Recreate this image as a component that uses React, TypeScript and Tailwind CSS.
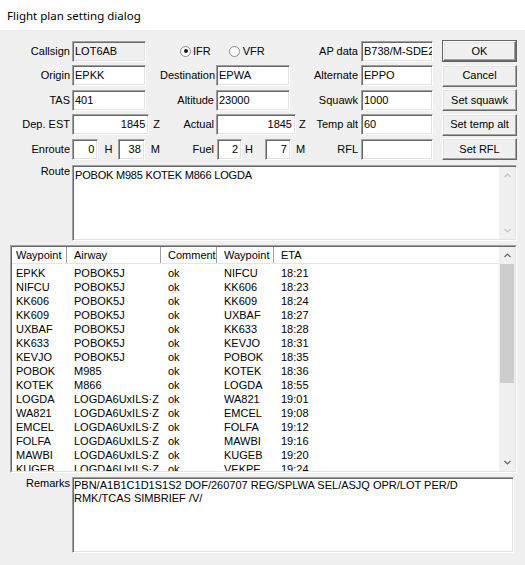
import React from 'react';

type Wp = [string, string, string, string, string];

const legs: Wp[] = [
  ['EPKK', 'POBOK5J', 'ok', 'NIFCU', '18:21'],
  ['NIFCU', 'POBOK5J', 'ok', 'KK606', '18:23'],
  ['KK606', 'POBOK5J', 'ok', 'KK609', '18:24'],
  ['KK609', 'POBOK5J', 'ok', 'UXBAF', '18:27'],
  ['UXBAF', 'POBOK5J', 'ok', 'KK633', '18:28'],
  ['KK633', 'POBOK5J', 'ok', 'KEVJO', '18:31'],
  ['KEVJO', 'POBOK5J', 'ok', 'POBOK', '18:35'],
  ['POBOK', 'M985', 'ok', 'KOTEK', '18:36'],
  ['KOTEK', 'M866', 'ok', 'LOGDA', '18:55'],
  ['LOGDA', 'LOGDA6UxILS·Z', 'ok', 'WA821', '19:01'],
  ['WA821', 'LOGDA6UxILS·Z', 'ok', 'EMCEL', '19:08'],
  ['EMCEL', 'LOGDA6UxILS·Z', 'ok', 'FOLFA', '19:12'],
  ['FOLFA', 'LOGDA6UxILS·Z', 'ok', 'MAWBI', '19:16'],
  ['MAWBI', 'LOGDA6UxILS·Z', 'ok', 'KUGEB', '19:20'],
  ['KUGEB', 'LOGDA6UxILS·Z', 'ok', 'VEKPE', '19:24'],
];

// classic 3D edges
const sunken =
  'border border-t-[#a0a0a0] border-l-[#a0a0a0] border-r-white border-b-white shadow-[inset_1px_1px_0_#696969,inset_-1px_-1px_0_#e3e3e3]';
const raised =
  'border border-t-white border-l-white border-r-[#696969] border-b-[#696969] shadow-[inset_-1px_-1px_0_#a0a0a0,inset_1px_1px_0_#e3e3e3]';

function Field({ children, className = '', right, grey }: { children?: React.ReactNode; className?: string; right?: boolean; grey?: boolean }) {
  return (
    <div
      className={`h-[21px] ${sunken} ${grey ? 'bg-[#f0f0f0]' : 'bg-white'} flex items-center whitespace-nowrap overflow-hidden ${right ? 'justify-end pr-[3px]' : 'pl-[2px]'} ${className}`}
    >
      {children}
    </div>
  );
}

function Button({ children, primary }: { children: React.ReactNode; primary?: boolean }) {
  if (primary) {
    return (
      <div className="w-[75px] h-[22px] border border-[#646464]">
        <div className={`h-full ${raised} bg-[#f0f0f0] flex items-center justify-center`}>{children}</div>
      </div>
    );
  }
  return <div className={`w-[75px] h-[22px] ${raised} bg-[#f0f0f0] flex items-center justify-center`}>{children}</div>;
}

function Radio({ checked }: { checked?: boolean }) {
  return (
    <span className="w-[11px] h-[11px] rounded-full border border-[#8c8c8c] bg-white flex items-center justify-center shrink-0">
      {checked && <span className="w-[4px] h-[4px] rounded-full bg-[#1a1a1a]" />}
    </span>
  );
}

function Chevron({ down, muted }: { down?: boolean; muted?: boolean }) {
  return (
    <svg width="7" height="5" viewBox="0 0 7 5" className={down ? 'rotate-180' : ''}>
      <polyline points="0.5,4 3.5,1 6.5,4" fill="none" stroke={muted ? '#c0c0c0' : '#606060'} strokeWidth="1.2" />
    </svg>
  );
}

function Label({ children, className }: { children: React.ReactNode; className: string }) {
  return <span className={`text-right whitespace-nowrap shrink-0 ${className}`}>{children}</span>;
}

const cols = [
  { name: 'Waypoint', cls: 'w-[55px] pl-[4px]' },
  { name: 'Airway', cls: 'w-[94px] pl-[7px]' },
  { name: 'Comment', cls: 'w-[56px] pl-[7px]' },
  { name: 'Waypoint', cls: 'w-[57px] pl-[7px]' },
  { name: 'ETA', cls: 'flex-1 pl-[7px]' },
];

export default function App() {
  return (
    <div className="w-[525px] h-[565px] bg-[#f0f0f0] text-black font-['Liberation_Sans',Arial,sans-serif] text-[11px] leading-[13px] overflow-hidden">
      <div className="h-[30px] bg-white flex items-center pl-[7px] font-['Noto_Sans',sans-serif] text-[11.5px]">
        Flight plan setting dialog
      </div>

      {/* Form fields */}
      <div className="pt-[10px] flex flex-col gap-y-[2.5px]">
        <div className="flex items-center h-[22px]">
          <div className="w-[160px] flex items-center">
            <Label className="w-[70px]">Callsign</Label>
            <Field className="ml-[2px] w-[74px]" grey>LOT6AB</Field>
          </div>
          <div className="w-[146px] flex items-center pl-[20px]">
            <Radio checked />
            <span className="ml-[2px]">IFR</span>
            <span className="ml-[18px]"><Radio /></span>
            <span className="ml-[3px]">VFR</span>
          </div>
          <div className="w-[130px] flex items-center">
            <Label className="w-[52px]">AP data</Label>
            <Field className="ml-[3px] w-[72px]">B738/M-SDE2</Field>
          </div>
          <div className="pl-[6px]"><Button primary>OK</Button></div>
        </div>

        <div className="flex items-center h-[22px]">
          <div className="w-[160px] flex items-center">
            <Label className="w-[70px]">Origin</Label>
            <Field className="ml-[2px] w-[74px]">EPKK</Field>
          </div>
          <div className="w-[146px] flex items-center">
            <Label className="w-[54px]">Destination</Label>
            <Field className="ml-[2px] w-[74px]">EPWA</Field>
          </div>
          <div className="w-[130px] flex items-center">
            <Label className="w-[52px]">Alternate</Label>
            <Field className="ml-[3px] w-[72px]">EPPO</Field>
          </div>
          <div className="pl-[6px]"><Button>Cancel</Button></div>
        </div>

        <div className="flex items-center h-[22px]">
          <div className="w-[160px] flex items-center">
            <Label className="w-[70px]">TAS</Label>
            <Field className="ml-[2px] w-[74px]">401</Field>
          </div>
          <div className="w-[146px] flex items-center">
            <Label className="w-[54px]">Altitude</Label>
            <Field className="ml-[2px] w-[74px]">23000</Field>
          </div>
          <div className="w-[130px] flex items-center">
            <Label className="w-[52px]">Squawk</Label>
            <Field className="ml-[3px] w-[72px]">1000</Field>
          </div>
          <div className="pl-[6px]"><Button>Set squawk</Button></div>
        </div>

        <div className="flex items-center h-[22px]">
          <div className="w-[160px] flex items-center">
            <Label className="w-[70px]">Dep. EST</Label>
            <Field className="ml-[2px] w-[78px]" right>1845</Field>
            <span className="ml-[4px]">Z</span>
          </div>
          <div className="w-[146px] flex items-center">
            <Label className="w-[54px]">Actual</Label>
            <Field className="ml-[2px] w-[80px]" right>1845</Field>
            <span className="ml-[3px]">Z</span>
          </div>
          <div className="w-[130px] flex items-center">
            <Label className="w-[52px]">Temp alt</Label>
            <Field className="ml-[3px] w-[72px]">60</Field>
          </div>
          <div className="pl-[6px]"><Button>Set temp alt</Button></div>
        </div>

        <div className="flex items-center h-[22px]">
          <div className="w-[160px] flex items-center">
            <Label className="w-[70px]">Enroute</Label>
            <Field className="ml-[2px] w-[28px]" right>0</Field>
            <span className="ml-[6px]">H</span>
            <Field className="ml-[6px] w-[28px]" right>38</Field>
            <span className="ml-[6px]">M</span>
          </div>
          <div className="w-[146px] flex items-center">
            <Label className="w-[54px]">Fuel</Label>
            <Field className="ml-[3px] w-[25px]" right>2</Field>
            <span className="ml-[3px]">H</span>
            <Field className="ml-[12px] w-[26px]" right>7</Field>
            <span className="ml-[5px]">M</span>
          </div>
          <div className="w-[130px] flex items-center">
            <Label className="w-[52px]">RFL</Label>
            <Field className="ml-[3px] w-[72px]" />
          </div>
          <div className="pl-[6px]"><Button>Set RFL</Button></div>
        </div>
      </div>

      {/* Route */}
      <div className="mt-[5px] flex">
        <Label className="w-[70px]">Route</Label>
        <div className={`ml-[2px] w-[445px] h-[76px] bg-white ${sunken} flex`}>
          <div className="flex-1 pl-[2px] pt-[3px] tracking-[-0.2px]">POBOK M985 KOTEK M866 LOGDA</div>
          <div className="w-[16px] my-[1px] mr-[1px] bg-[#f0f0f0] flex flex-col justify-between">
            <div className="h-[17px] flex items-center justify-center"><Chevron muted /></div>
            <div className="h-[17px] flex items-center justify-center"><Chevron down muted /></div>
          </div>
        </div>
      </div>

      {/* Leg list */}
      <div className="mt-[4px] ml-[10px] w-[507px] h-[228px] border border-t-[#a0a0a0] border-l-[#a0a0a0] border-r-white border-b-white">
        <div className="h-full border border-t-[#696969] border-l-[#696969] border-r-[#e3e3e3] border-b-[#e3e3e3] bg-white flex">
          <div className="flex-1 min-w-0 overflow-hidden">
            <div className="flex h-[17px] border-b border-[#e5e5e5]">
              {cols.map((c, i) => (
                <div key={i} className={`${c.cls} flex items-center ${i < 4 ? 'border-r border-[#a0a0a0]' : ''}`}>
                  {c.name}
                </div>
              ))}
            </div>
            <div className="pt-[1.5px]">
              {legs.map((row, r) => (
                <div key={r} className="flex h-[14px] leading-[14px] whitespace-nowrap">
                  {row.map((cell, i) => (
                    <div key={i} className={cols[i].cls}>{cell}</div>
                  ))}
                </div>
              ))}
            </div>
          </div>
          <div className="w-[16px] bg-[#f0f0f0] flex flex-col">
            <div className="h-[17px] flex items-center justify-center"><Chevron /></div>
            <div className="flex-1 flex flex-col">
              <div className="h-[119px] mx-[1px] bg-[#cdcdcd]" />
            </div>
            <div className="h-[17px] flex items-center justify-center"><Chevron down /></div>
          </div>
        </div>
      </div>

      {/* Remarks */}
      <div className="mt-[4px] flex">
        <Label className="w-[70px]">Remarks</Label>
        <div className={`ml-[2px] w-[442px] h-[76px] bg-white ${sunken} pl-[1px] pt-[1px]`}>
          PBN/A1B1C1D1S1S2 DOF/260707 REG/SPLWA SEL/ASJQ OPR/LOT PER/D
          <br />
          RMK/TCAS SIMBRIEF /V/
        </div>
      </div>
    </div>
  );
}
